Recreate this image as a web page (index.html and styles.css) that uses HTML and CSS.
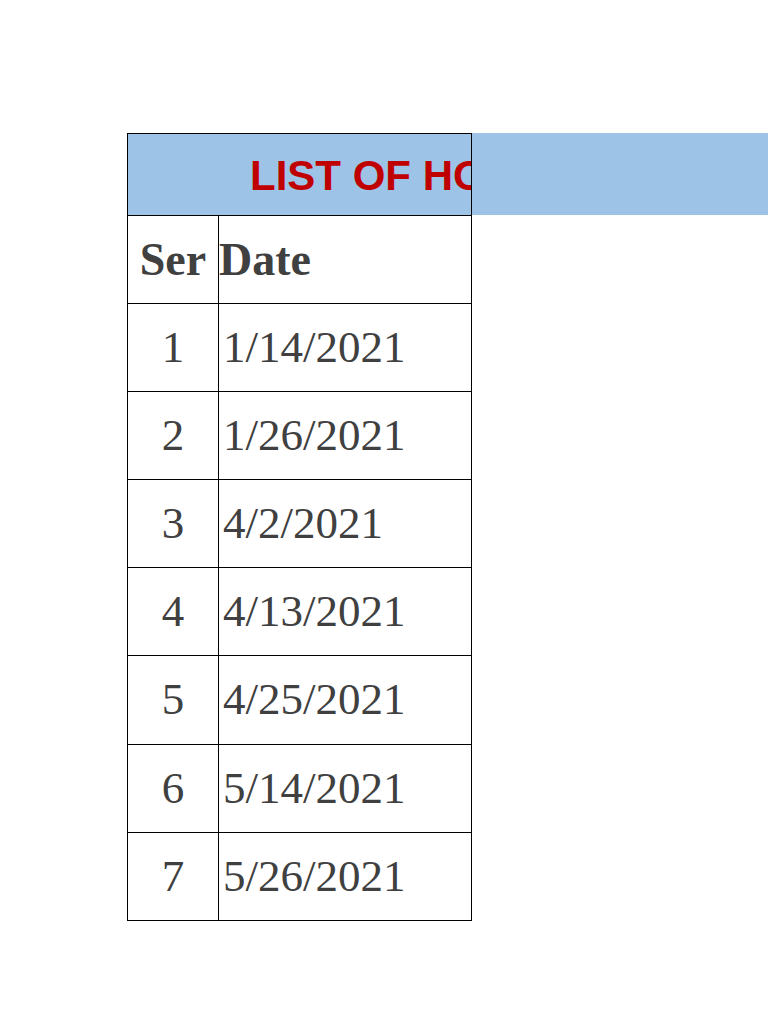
FILE: index.html
```html
<!DOCTYPE html>
<html lang="en">
<head>
<meta charset="utf-8">
<title>List of Holidays</title>
<link rel="stylesheet" href="styles.css">
</head>
<body>
<div class="sheet">
  <div class="table">
    <div class="title"><span>LIST OF HOLIDAYS 2021</span></div>
    <div class="cell ser head">Ser</div>
    <div class="cell date head">Date</div>
    <div class="cell ser">1</div><div class="cell date">1/14/2021</div>
    <div class="cell ser">2</div><div class="cell date">1/26/2021</div>
    <div class="cell ser">3</div><div class="cell date">4/2/2021</div>
    <div class="cell ser">4</div><div class="cell date">4/13/2021</div>
    <div class="cell ser">5</div><div class="cell date">4/25/2021</div>
    <div class="cell ser">6</div><div class="cell date">5/14/2021</div>
    <div class="cell ser">7</div><div class="cell date">5/26/2021</div>
  </div>
  <div class="band"></div>
</div>
</body>
</html>
```
FILE: styles.css
```css
html, body {
  margin: 0;
  padding: 0;
  background: #ffffff;
}
.sheet {
  display: flex;
  align-items: flex-start;
  padding-top: 133px;
  padding-left: 127px;
}
.table {
  display: grid;
  grid-template-columns: 91px 253px;
  border-left: 1px solid #000;
  border-top: 1px solid #000;
  flex: none;
}
.title {
  grid-column: 1 / 3;
  height: 78px;
  padding-top: 3px;
  line-height: 78px;
  background: #9dc3e6;
  border-right: 1px solid #000;
  border-bottom: 1px solid #000;
  overflow: hidden;
  white-space: nowrap;
  padding-left: 122px;
  font-family: "Liberation Sans", Arial, sans-serif;
  font-weight: bold;
  font-size: 42px;
  color: #c00000;
}
.band {
  flex: 1;
  height: 82px;
  background: #9dc3e6;
}
.cell {
  height: 87.1px;
  line-height: 87.1px;
  border-right: 1px solid #000;
  border-bottom: 1px solid #000;
  font-family: "Liberation Serif", "Times New Roman", serif;
  font-size: 45px;
  color: #404040;
  white-space: nowrap;
  overflow: hidden;
}
.ser {
  text-align: center;
}
.date {
  padding-left: 4px;
}
.head {
  font-weight: bold;
  font-size: 46px;
}
.head.date {
  padding-left: 0;
}
```
